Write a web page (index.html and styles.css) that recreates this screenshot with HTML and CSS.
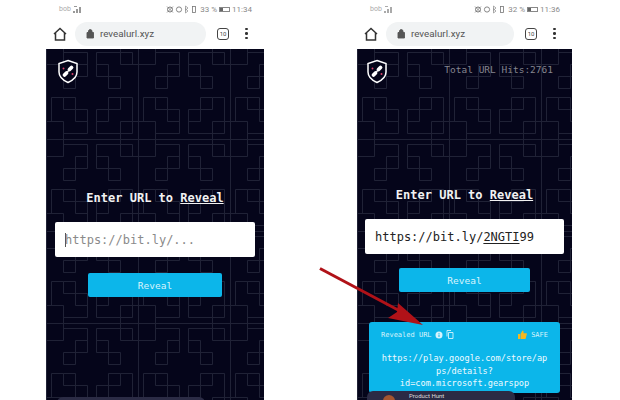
FILE: index.html
```html
<!DOCTYPE html>
<html lang="en">
<head>
  <meta charset="UTF-8" />
  <title>revealurl.xyz</title>
  <link rel="stylesheet" href="styles.css">
</head>
<body>
  <svg class="defs" width="0" height="0">
    <defs>
      <!-- fret quadrant, drawn from the tile centre -->
      <path id="core" d="M4.500 16.500V40.500H28.500M16.500 28.500V4.500H28.500V16.500H4.500M16.500 28.500H4.500M28.500 46V28.500H46"/>
      <pattern id="fret" width="92" height="92" patternUnits="userSpaceOnUse" x="0" y="-2">
        <g fill="none" stroke="#202236" stroke-width="1">
          <path d="M0 .5H92M.5 0V92"/>
          <g transform="matrix(-1 0 0 -1 46 46)">
            <use href="#core"/>
          </g>
          <g transform="matrix(1 0 0 -1 46 46)">
            <use href="#core"/>
            <path d="M28.500 40.500H40.500V28.500"/>
          </g>
          <g transform="matrix(-1 0 0 1 46 46)">
            <use href="#core"/>
            <path d="M28.500 4.500H40.500V28.500"/>
          </g>
          <g transform="matrix(1 0 0 1 46 46)">
            <use href="#core"/>
            <path d="M28.500 4.500H40.500V40.500H28.500"/>
          </g>
        </g>
      </pattern>
      <g id="logo">
        <path d="M11 1.500 20 4.500V13C20 18 15.500 21.500 11 23.500 6.500 21.500 2 18 2 13V4.500Z" fill="#05051a" stroke="#fff" stroke-width="1.500"/>
        <path d="M7.500 16 9.500 14M12.500 10.500 14.500 8.500" stroke="#fff" stroke-width="3.800" stroke-linecap="round"/>
        <path d="M9 14.500 13 10" stroke="#fff" stroke-width="1.400"/>
        <circle cx="6.500" cy="9.500" r="1" fill="#d8416a"/>
        <circle cx="15.500" cy="15" r="1" fill="#d8416a"/>
      </g>
      <g id="home">
        <path d="M2 8 8 2.500 14 8M3.500 7V14H12.500V7" fill="none" stroke="#333" stroke-width="1.500"/>
      </g>
      <g id="lock">
        <path d="M1 4.500H7.500V10H1ZM2.500 4.500V3A1.800 1.800 0 0 1 6 3V4.500" fill="#555" stroke="#555" stroke-width=".9"/>
      </g>
      <g id="status-icons">
        <circle cx="4" cy="4.500" r="2.500" fill="none" stroke="#777"/>
        <path d="M1 1.500 7 7.500M7 1.500 1 7.500" stroke="#777" stroke-width=".7"/>
        <circle cx="13" cy="4.500" r="2.600" fill="none" stroke="#888"/>
        <path d="M19.500 1V8L22 6 19 3.500M19.500 1 22 3 19 5.500" fill="none" stroke="#888" stroke-width=".7"/>
        <rect x="26.500" y="1.500" width="3" height="6" fill="none" stroke="#777" stroke-width=".8"/>
      </g>
    </defs>
  </svg>

  <div class="phone phone-left">
    <div class="status">
      <span class="carrier">bob <svg width="10" height="8"><path d="M0 8V6H2V8ZM3 8V4H5V8ZM6 8V2H8V8ZM1 1H4V2H1Z" fill="#999"/></svg></span>
      <span class="status-right">
        <svg width="32" height="9"><use href="#status-icons"/></svg>
        <span>33 %</span>
        <span class="battery"></span>
        <span>11:34</span>
      </span>
    </div>
    <div class="toolbar">
      <svg class="home" width="16" height="16"><use href="#home"/></svg>
      <div class="omnibox">
        <svg width="9" height="11"><use href="#lock"/></svg>
        <span>revealurl.xyz</span>
      </div>
      <span class="tabs">10</span>
      <span class="dots"><i></i><i></i><i></i></span>
    </div>
    <div class="screen">
      <svg class="pattern"><rect width="100%" height="100%" fill="url(#fret)"/></svg>
      <div class="top-row">
        <svg class="logo" width="22" height="25"><use href="#logo"/></svg>
      </div>
      <h2>Enter URL to <u>Reveal</u></h2>
      <div class="url-input placeholder"><i class="caret"></i>https://bit.ly/...</div>
      <button type="button" class="btn">Reveal</button>
      <div class="ph-badge"></div>
    </div>
  </div>

  <div class="phone phone-right">
    <div class="status">
      <span class="carrier">bob <svg width="10" height="8"><path d="M0 8V6H2V8ZM3 8V4H5V8ZM6 8V2H8V8ZM1 1H4V2H1Z" fill="#aaa"/></svg></span>
      <span class="status-right">
        <svg width="32" height="9"><use href="#status-icons"/></svg>
        <span>32 %</span>
        <span class="battery"></span>
        <span>11:36</span>
      </span>
    </div>
    <div class="toolbar">
      <svg class="home" width="16" height="16"><use href="#home"/></svg>
      <div class="omnibox">
        <svg width="9" height="11"><use href="#lock"/></svg>
        <span>revealurl.xyz</span>
      </div>
      <span class="tabs">10</span>
      <span class="dots"><i></i><i></i><i></i></span>
    </div>
    <div class="screen">
      <svg class="pattern"><rect width="100%" height="100%" fill="url(#fret)"/></svg>
      <div class="top-row">
        <svg class="logo" width="22" height="25"><use href="#logo"/></svg>
        <span class="hits">Total URL Hits:2761</span>
      </div>
      <h2>Enter URL to <u>Reveal</u></h2>
      <div class="url-input">https://bit.ly/<u>2NGTI</u>99</div>
      <button type="button" class="btn">Reveal</button>
      <div class="card">
        <div class="card-head">
          <span>Revealed URL</span>
          <svg width="8" height="8"><circle cx="4" cy="4" r="3.500" fill="#d6f3fc"/><path d="M4 3.500V6M4 2V2.800" stroke="#0cb6ea"/></svg>
          <svg width="8" height="9"><path d="M2.500 2.500H7V8.500H2.500ZM1 6.500V.5H5" fill="none" stroke="#d6f3fc" stroke-width=".9"/></svg>
          <span class="safe">
            <svg width="9" height="9"><path d="M0 4H2V9H0ZM2.500 4 4.500 0.500C5.500 .5 5.800 1.500 5.500 3.200H8.500C9 3.200 9 4 8.700 4.500L7.700 8.500C7.500 9 7 9 6.500 9H2.500Z" fill="#f5b81d"/></svg>
            SAFE
          </span>
        </div>
        <p>https://play.google.com/store/ap<br>ps/details?<br>id=com.microsoft.gearspop</p>
      </div>
      <div class="ph-badge">
        <span class="ph-dot"></span>
        <span>Product Hunt</span>
      </div>
    </div>
  </div>

  <svg class="arrow" width="620" height="400">
    <path d="M320 268.500 400 311" stroke="#b01218" stroke-width="3"/>
    <path d="M423 325 388 318 397 312 398 303Z" fill="#b01218"/>
  </svg>
</body>
</html>
```
FILE: styles.css
```css
* {
  box-sizing: border-box;
  margin: 0;
  padding: 0;
}

body {
  background: #fff;
  display: flex;
  gap: 93px;
  padding-left: 46px;
  height: 400px;
  overflow: hidden;
  font-family: "DejaVu Sans Mono", monospace;
}

.defs {
  position: absolute;
}

.phone {
  display: flex;
  flex-direction: column;
  height: 400px;
}

.phone-left {
  width: 218px;
}

.phone-right {
  width: 215px;
}

/* status bar */
.status {
  height: 18px;
  padding: 0 12px 0 13px;
  display: flex;
  justify-content: space-between;
  align-items: center;
  font-family: Roboto, sans-serif;
  font-size: 7px;
  color: #aaa;
}

.carrier {
  display: flex;
  align-items: center;
  gap: 2px;
}

.status-right {
  display: flex;
  align-items: center;
  gap: 2px;
  font-size: 8px;
  color: #8a8a8a;
}

.battery {
  width: 11px;
  height: 5px;
  border: 1px solid #888;
  background: linear-gradient(to right, #666 35%, transparent 35%);
}

/* browser toolbar */
.toolbar {
  height: 31px;
  display: flex;
  align-items: center;
  padding-left: 6px;
}

.home {
  flex: none;
}

.omnibox {
  width: 131px;
  height: 24px;
  margin-left: 7px;
  padding-left: 11px;
  display: flex;
  align-items: center;
  gap: 5px;
  background: #f1f3f4;
  border-radius: 12px;
  font-family: Roboto, sans-serif;
  font-size: 9.800px;
  color: #555;
}

.phone-right .omnibox {
  width: 128px;
}

.tabs {
  width: 12px;
  height: 12px;
  margin-left: 11px;
  border: 1.500px solid #444;
  border-radius: 3px;
  display: flex;
  justify-content: center;
  align-items: center;
  font-family: Roboto, sans-serif;
  font-size: 6px;
  color: #444;
}

.dots {
  margin-left: 16px;
  display: flex;
  flex-direction: column;
  gap: 2px;
}

.dots i {
  width: 2.500px;
  height: 2.500px;
  border-radius: 50%;
  background: #333;
}

/* page */
.screen {
  position: relative;
  flex: 1;
  display: flex;
  flex-direction: column;
  align-items: center;
  background: #05051a;
  overflow: hidden;
}

.pattern {
  position: absolute;
  top: 0;
  left: 0;
  width: 100%;
  height: 100%;
}

.top-row,
.screen h2,
.url-input,
.btn,
.card {
  position: relative;
}

.top-row {
  width: 100%;
  height: 25px;
  margin-top: 10px;
  padding: 0 11px;
  display: flex;
  justify-content: space-between;
  align-items: center;
}

.phone-right .top-row {
  padding: 0 19px 0 9px;
}

.hits {
  margin-bottom: 4px;
  font-size: 9.500px;
  color: #85858f;
}

.screen h2 {
  margin-top: 104px;
  font-size: 12px;
  line-height: 20px;
  font-weight: bold;
  color: #f2f2f2;
}

.phone-right h2 {
  margin-top: 101px;
}

.url-input {
  width: 200px;
  height: 35px;
  margin-top: 14px;
  padding-left: 10px;
  display: flex;
  align-items: center;
  white-space: pre;
  background: #fff;
  border-radius: 2px;
  font-size: 12px;
  color: #222;
}

.phone-right .url-input {
  width: 199px;
}

.url-input u {
  text-underline-offset: 2px;
}

.placeholder {
  color: #8a8a8a;
}

.caret {
  width: 1px;
  height: 14px;
  margin-right: -1px;
  background: #555;
}

.btn {
  width: 134px;
  height: 24px;
  margin-top: 16px;
  border: none;
  border-radius: 2px;
  background: #0cb6ea;
  color: #d8f4fc;
  font-family: inherit;
  font-size: 9.500px;
}

.phone-right .btn {
  width: 131px;
  margin-top: 14px;
}

.card {
  width: 191px;
  height: 71px;
  margin-top: 30px;
  padding: 8px 12px;
  background: #0cb6ea;
  border-radius: 3px;
  color: #d8f4fc;
}

.card-head {
  display: flex;
  align-items: center;
  gap: 3px;
  font-size: 7px;
}

.safe {
  margin-left: auto;
  display: flex;
  align-items: center;
  gap: 4px;
}

.card p {
  margin-top: 13px;
  font-size: 8.600px;
  line-height: 12.500px;
  text-align: center;
  color: #eefaff;
  white-space: nowrap;
}

/* product hunt badge, half off the bottom of the page */
.ph-badge {
  position: absolute;
  left: 11px;
  top: 348px;
  width: 148px;
  height: 30px;
  padding: 1px 0 0 16px;
  display: flex;
  gap: 14px;
  background: #2b2b45;
  border-radius: 6px;
  font-family: Roboto, sans-serif;
  font-size: 6px;
  color: #ddd;
}

.phone-right .ph-badge {
  left: 10px;
  top: 342px;
}

.ph-dot {
  width: 12px;
  height: 12px;
  margin-top: 3px;
  border-radius: 50%;
  background: #a4552f;
}

.arrow {
  position: absolute;
  top: 0;
  left: 0;
  pointer-events: none;
}
```
